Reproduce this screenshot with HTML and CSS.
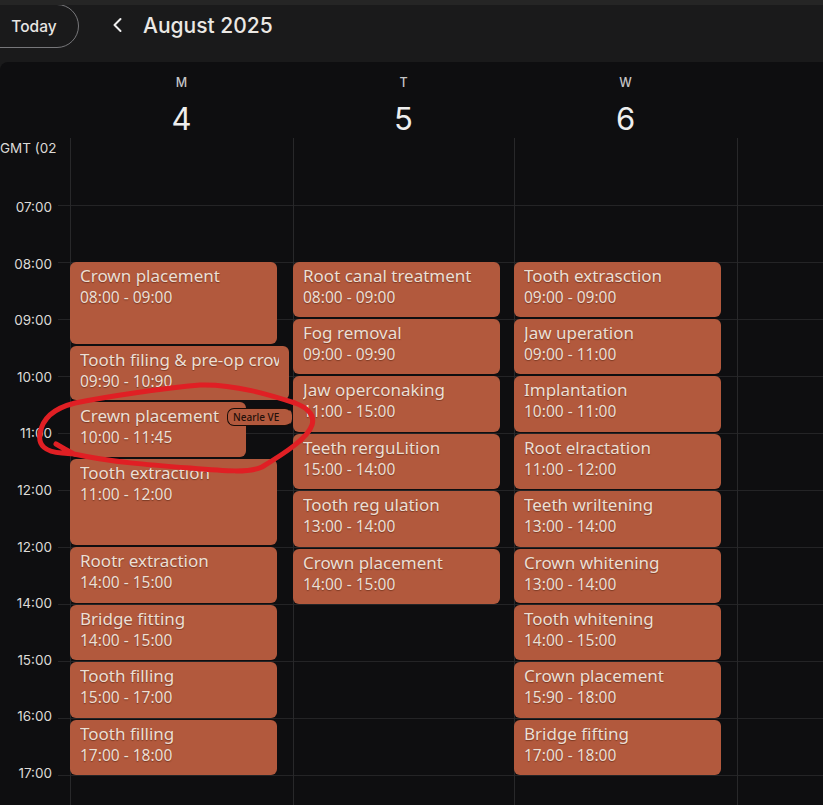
FILE: index.html
```html
<!DOCTYPE html>
<html lang="en">
<head>
    <meta charset="UTF-8">
    <meta name="viewport" content="width=device-width, initial-scale=1.0">
    <title>August 2025 | Calendar</title>
    <link rel="stylesheet" href="styles.css">
</head>
<body>
    <div class="page">
        <header class="toolbar">
            <button class="today-btn">Today</button>
            <svg class="prev-icon" width="12" height="16" viewBox="0 0 12 16" fill="none">
                <path d="M9.5 2 L3.5 8 L9.5 14" stroke="#eeeeee" stroke-width="2" stroke-linecap="round" stroke-linejoin="round"/>
            </svg>
            <h1 class="month-title">August 2025</h1>
        </header>

        <main class="calendar">
            <div class="day-heads">
                <div></div>
                <div class="day-head"><span class="weekday">M</span><span class="day-num">4</span></div>
                <div class="day-head"><span class="weekday">T</span><span class="day-num">5</span></div>
                <div class="day-head"><span class="weekday">W</span><span class="day-num">6</span></div>
                <div></div>
            </div>

            <div class="schedule">
                <div class="time-col">
                    <div class="gmt">GMT (02</div>
                    <div class="time">07:00</div>
                    <div class="time">08:00</div>
                    <div class="time">09:00</div>
                    <div class="time">10:00</div>
                    <div class="time">11:00</div>
                    <div class="time">12:00</div>
                    <div class="time">12:00</div>
                    <div class="time">14:00</div>
                    <div class="time">15:00</div>
                    <div class="time">16:00</div>
                    <div class="time">17:00</div>
                </div>

                <!-- Monday -->
                <div class="day">
                    <article class="event event-long"><h3>Crown placement</h3><p>08:00 - 09:00</p></article>
                    <article class="event event-wide"><h3>Tooth filing &amp; pre-op crown</h3><p>09:90 - 10:90</p></article>
                    <article class="event event-narrow">
                        <h3>Crewn placement</h3><p>10:00 - 11:45</p>
                        <span class="near-tag">Nearle VE</span>
                    </article>
                    <article class="event event-longer"><h3>Tooth extraction</h3><p>11:00 - 12:00</p></article>
                    <article class="event event-tall"><h3>Rootr extraction</h3><p>14:00 - 15:00</p></article>
                    <article class="event"><h3>Bridge fitting</h3><p>14:00 - 15:00</p></article>
                    <article class="event event-tall"><h3>Tooth filling</h3><p>15:00 - 17:00</p></article>
                    <article class="event"><h3>Tooth filling</h3><p>17:00 - 18:00</p></article>
                </div>

                <!-- Tuesday -->
                <div class="day">
                    <article class="event"><h3>Root canal treatment</h3><p>08:00 - 09:00</p></article>
                    <article class="event"><h3>Fog removal</h3><p>09:00 - 09:90</p></article>
                    <article class="event event-tall"><h3>Jaw operconaking</h3><p>11:00 - 15:00</p></article>
                    <article class="event"><h3>Teeth rerguLition</h3><p>15:00 - 14:00</p></article>
                    <article class="event event-tall"><h3>Tooth reg ulation</h3><p>13:00 - 14:00</p></article>
                    <article class="event"><h3>Crown placement</h3><p>14:00 - 15:00</p></article>
                </div>

                <!-- Wednesday -->
                <div class="day">
                    <article class="event"><h3>Tooth extrasction</h3><p>09:00 - 09:00</p></article>
                    <article class="event"><h3>Jaw uperation</h3><p>09:00 - 11:00</p></article>
                    <article class="event event-tall"><h3>Implantation</h3><p>10:00 - 11:00</p></article>
                    <article class="event"><h3>Root elractation</h3><p>11:00 - 12:00</p></article>
                    <article class="event event-tall"><h3>Teeth wriltening</h3><p>13:00 - 14:00</p></article>
                    <article class="event event-short"><h3>Crown whitening</h3><p>13:00 - 14:00</p></article>
                    <article class="event"><h3>Tooth whitening</h3><p>14:00 - 15:00</p></article>
                    <article class="event event-tall"><h3>Crown placement</h3><p>15:90 - 18:00</p></article>
                    <article class="event"><h3>Bridge fifting</h3><p>17:00 - 18:00</p></article>
                </div>

                <div class="day"></div>
            </div>
        </main>

        <!-- hand drawn circle over the Monday events -->
        <svg class="scribble" width="823" height="805" viewBox="0 0 823 805" fill="none">
            <path d="M56 444 Q66 450 74 454 L62 453 C45 452 38 445 40 434 C42 418 55 408 75 403 C110 396 165 388 200 385 C235 384 270 395 295 403 C308 408 315 415 312 425 C308 438 285 453 262 467 C250 473 225 471 190 468 C150 465 110 462 74 454" stroke="#e01f24" stroke-width="5" stroke-linecap="round" stroke-linejoin="round"/>
        </svg>
    </div>
</body>
</html>
```

FILE: styles.css
```css
* {
    box-sizing: border-box;
}

body {
    margin: 0;
    background: #1a1a1b;
    font-family: Inter, "Noto Sans", sans-serif;
    overflow: hidden;
}

.page {
    position: relative;
    width: 823px;
    height: 805px;
    overflow: hidden;
    border-top: 5px solid #252525;
}

/* Top bar */
.toolbar {
    display: flex;
    align-items: flex-start;
    height: 57px;
    background: #1a1a1b;
}

.today-btn {
    width: 110px;
    height: 44px;
    margin-left: -31px;
    margin-top: -1px;
    padding: 0 0 0 20px;
    background: transparent;
    border: 1px solid #77777a;
    border-radius: 22px;
    color: #e8e6e3;
    font-family: inherit;
    font-size: 15.5px;
    font-weight: 500;
}

.prev-icon {
    margin: 12px 0 0 32px;
}

.month-title {
    margin: 7px 0 0 20px;
    color: #ebe8e4;
    font-size: 21px;
    font-weight: 500;
    line-height: 28px;
}

/* Calendar */
.calendar {
    height: 743px;
    background: #0e0e10;
    border-top-left-radius: 8px;
}

.day-heads,
.schedule {
    display: grid;
    grid-template-columns: 70px 223px 221px 223px 86px;
}

.day-heads {
    height: 76px;
}

.day-head {
    display: flex;
    flex-direction: column;
    align-items: center;
    padding-top: 13px;
}

.weekday {
    color: #c4c4c6;
    font-size: 12.5px;
    font-weight: 500;
    line-height: 16px;
}

.day-num {
    margin-top: 9px;
    color: #eeeeee;
    font-size: 31px;
    line-height: 38px;
}

.schedule {
    position: relative;
    height: 667px;
}

/* hour lines */
.schedule::before {
    content: "";
    position: absolute;
    top: 67px;
    left: 58px;
    right: 0;
    bottom: 0;
    background-image: linear-gradient(to bottom, #242426 1px, transparent 1px);
    background-size: 100% 57px;
}

.time-col {
    position: relative;
    display: flex;
    flex-direction: column;
    text-align: right;
    color: #dcdad7;
    font-size: 13.5px;
}

.gmt {
    height: 20px;
    margin-bottom: 21px;
    padding-right: 18px;
    line-height: 20px;
    white-space: nowrap;
}

.time {
    flex: 0 0 56.6px;
    padding-right: 18px;
    line-height: 56.6px;
}

.day {
    position: relative;
    display: flex;
    flex-direction: column;
    gap: 2px;
    padding-top: 124px;
    border-left: 1px solid #28282a;
}

/* Events */
.event {
    position: relative;
    flex: none;
    width: 207px;
    height: 55px;
    margin-left: -1px;
    padding: 3px 10px 0;
    background: #b2593d;
    border-radius: 6px;
    color: #ecdfd4;
    font-family: "Noto Sans", sans-serif;
    text-shadow: 0 1px 1px rgba(70, 25, 10, 0.5);
}

.event h3 {
    margin: 0;
    overflow: hidden;
    font-size: 17px;
    font-weight: 400;
    line-height: 22px;
    white-space: nowrap;
}

.event p {
    margin: 0;
    font-size: 15.5px;
    line-height: 20px;
}

.event-short {
    height: 54px;
}

.event-tall {
    height: 56px;
}

.event-long {
    height: 82px;
}

.event-longer {
    height: 86px;
}

.event-wide {
    width: 219px;
    height: 54px;
}

.event-narrow {
    width: 176px;
}

.near-tag {
    position: absolute;
    top: 6px;
    left: 157px;
    width: 65px;
    height: 18px;
    padding-left: 5px;
    background: #b2593d;
    border: 1px solid #1a0d08;
    border-right-color: transparent;
    border-radius: 7px;
    color: #24100a;
    font-size: 10px;
    font-weight: 500;
    line-height: 16px;
    text-shadow: none;
}

.scribble {
    position: absolute;
    top: -5px;
    left: 0;
    pointer-events: none;
}
```
